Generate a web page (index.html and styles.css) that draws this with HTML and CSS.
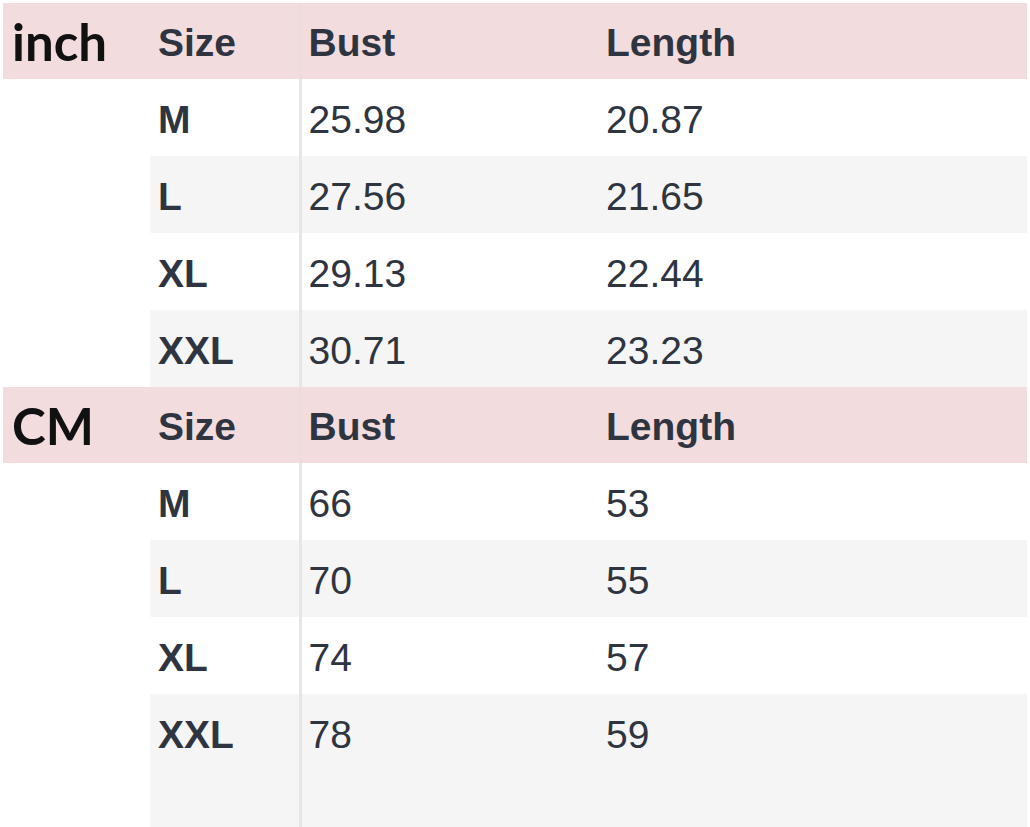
FILE: index.html
```html
<!DOCTYPE html>
<html>
<head>
<meta charset="utf-8">
<link rel="stylesheet" href="styles.css">
</head>
<body>
<table class="chart">
  <colgroup>
    <col class="c-label"><col class="c-size"><col class="c-bust"><col class="c-len">
  </colgroup>
  <tr class="head">
    <td class="unit">inch</td><td class="sz">Size</td><td class="bust">Bust</td><td class="len">Length</td>
  </tr>
  <tr class="row"><td class="blank"></td><td class="sz">M</td><td class="bust">25.98</td><td class="len">20.87</td></tr>
  <tr class="row alt"><td class="blank"></td><td class="sz">L</td><td class="bust">27.56</td><td class="len">21.65</td></tr>
  <tr class="row"><td class="blank"></td><td class="sz">XL</td><td class="bust">29.13</td><td class="len">22.44</td></tr>
  <tr class="row alt"><td class="blank"></td><td class="sz">XXL</td><td class="bust">30.71</td><td class="len">23.23</td></tr>
  <tr class="head">
    <td class="unit">CM</td><td class="sz">Size</td><td class="bust">Bust</td><td class="len">Length</td>
  </tr>
  <tr class="row"><td class="blank"></td><td class="sz">M</td><td class="bust">66</td><td class="len">53</td></tr>
  <tr class="row alt"><td class="blank"></td><td class="sz">L</td><td class="bust">70</td><td class="len">55</td></tr>
  <tr class="row"><td class="blank"></td><td class="sz">XL</td><td class="bust">74</td><td class="len">57</td></tr>
  <tr class="row alt last"><td class="blank"></td><td class="sz">XXL</td><td class="bust">78</td><td class="len">59</td></tr>
</table>
</body>
</html>
```
FILE: styles.css
```css
html, body {
  margin: 0;
  padding: 0;
  background: #ffffff;
}

.chart {
  border-collapse: collapse;
  border-spacing: 0;
  table-layout: fixed;
  width: 1024px;
  margin: 3px 0 0 3px;
  font-family: "Liberation Sans", Arial, sans-serif;
  color: #2f3441;
}

.c-label { width: 147px; }
.c-size { width: 150px; }
.c-bust { width: 298px; }
.c-len { width: 429px; }

.chart td {
  padding: 0 0 0 8px;
  vertical-align: middle;
  font-size: 39px;
  line-height: 1;
}

.chart td.bust {
  border-left: 3px solid #e6e6e6;
  padding-left: 7px;
}

.head td {
  height: 73px;
  background: #f2dcdd;
  font-weight: bold;
  padding-top: 3px;
}

.head td.bust {
  border-left-color: #ecdcdc;
}

.head td.unit {
  font-family: Lato, "Open Sans", sans-serif;
  font-size: 51px;
  color: #111111;
  padding-left: 9px;
  padding-top: 0;
  height: 76px;
}

.row td {
  height: 74px;
  background: #ffffff;
  padding-top: 3px;
}

.row.alt td {
  background: #f5f5f5;
}

.row td.blank,
.row.alt td.blank {
  background: #ffffff;
}

.row td.sz {
  font-weight: bold;
}

.row.last td {
  height: 112px;
  vertical-align: top;
  padding-top: 21px;
}
```
